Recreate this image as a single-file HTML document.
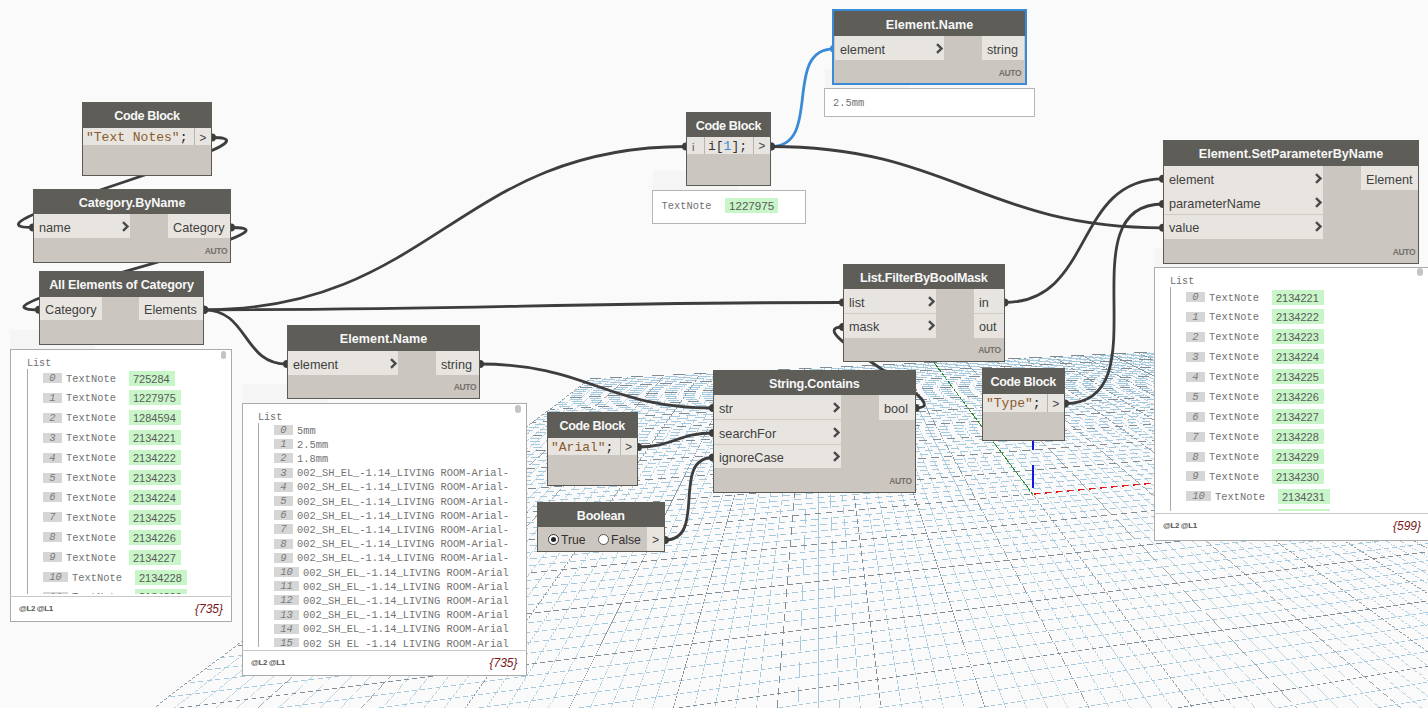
<!DOCTYPE html>
<html><head><meta charset="utf-8"><style>
html,body{margin:0;padding:0;width:1428px;height:708px;overflow:hidden;background:#fafafa;}
</style></head><body>
<svg style="position:absolute;left:0;top:0" width="1428" height="708" viewBox="0 0 1428 708">
<defs><clipPath id="gc"><rect x="0" y="0" width="1428" height="708"/></clipPath></defs>
<g clip-path="url(#gc)" shape-rendering="crispEdges"><g fill="none" stroke-width="1"><path d="M171.81 710.00L597.99 378.37" stroke="#a6c9de" stroke-width="0.789" stroke-dasharray="4.342 1.369" stroke-dashoffset="5.027"/><path d="M192.68 710.00L605.54 378.01" stroke="#a6c9de" stroke-width="0.779" stroke-dasharray="5.044 1.507" stroke-dashoffset="5.798"/><path d="M213.55 710.00L613.05 377.65" stroke="#a6c9de" stroke-width="0.769" stroke-dasharray="6.040 1.699" stroke-dashoffset="6.890"/><path d="M234.42 710.00L620.54 377.29" stroke="#a6c9de" stroke-width="0.758" stroke-dasharray="7.559 1.985" stroke-dashoffset="8.551"/><path d="M276.16 710.00L635.41 376.58" stroke="#a6c9de" stroke-width="0.733" stroke-dasharray="15.533 3.442" stroke-dashoffset="17.254"/><path d="M297.03 710.00L642.80 376.23" stroke="#a6c9de" stroke-width="0.719" stroke-dasharray="33.403 6.652" stroke-dashoffset="36.729"/><path d="M317.90 710.00L650.16 375.88" stroke="#a6c9de" stroke-width="0.709" stroke-dasharray="213.972 38.901" stroke-dashoffset="5.988"/><path d="M338.77 710.00L657.49 375.53" stroke="#a6c9de" stroke-width="0.724" stroke-dasharray="24.305 5.021" stroke-dashoffset="4.270"/><path d="M380.51 710.00L672.05 374.84" stroke="#a6c9de" stroke-width="0.754" stroke-dasharray="8.098 2.085" stroke-dashoffset="3.972"/><path d="M401.38 710.00L679.29 374.49" stroke="#a6c9de" stroke-width="0.770" stroke-dasharray="5.893 1.671" stroke-dashoffset="3.877"/><path d="M422.25 710.00L686.50 374.15" stroke="#a6c9de" stroke-width="0.786" stroke-dasharray="4.556 1.412" stroke-dashoffset="3.792"/><path d="M443.12 710.00L693.67 373.80" stroke="#a6c9de" stroke-width="0.802" stroke-dasharray="3.664 1.232" stroke-dashoffset="3.713"/><path d="M484.85 710.00L707.94 373.12" stroke="#a6c9de" stroke-width="0.834" stroke-dasharray="2.555 0.996" stroke-dashoffset="0.019"/><path d="M505.72 710.00L715.03 372.79" stroke="#a6c9de" stroke-width="0.850" stroke-dasharray="2.191 0.912" stroke-dashoffset="0.401"/><path d="M526.59 710.00L722.10 372.45" stroke="#a6c9de" stroke-width="0.865" stroke-dasharray="1.904 0.842" stroke-dashoffset="0.696"/><path d="M547.46 710.00L729.13 372.11" stroke="#a6c9de" stroke-width="0.881" stroke-dasharray="1.673 0.783" stroke-dashoffset="0.928"/><path d="M589.20 710.00L743.11 371.45" stroke="#a6c9de" stroke-width="0.910" stroke-dasharray="1.593 0.824" stroke-dashoffset="0.075"/><path d="M610.07 710.00L750.06 371.12" stroke="#a6c9de" stroke-width="0.924" stroke-dasharray="1.700 0.919" stroke-dashoffset="2.345"/><path d="M630.94 710.00L756.98 370.79" stroke="#a6c9de" stroke-width="0.937" stroke-dasharray="1.838 1.033" stroke-dashoffset="2.183"/><path d="M651.81 710.00L763.87 370.46" stroke="#a6c9de" stroke-width="0.950" stroke-dasharray="2.016 1.175" stroke-dashoffset="1.996"/><path d="M693.55 710.00L777.57 369.80" stroke="#a6c9de" stroke-width="0.971" stroke-dasharray="2.577 1.593" stroke-dashoffset="1.491"/><path d="M714.42 710.00L784.38 369.48" stroke="#a6c9de" stroke-width="0.980" stroke-dasharray="3.044 1.925" stroke-dashoffset="1.114"/><path d="M735.29 710.00L791.16 369.16" stroke="#a6c9de" stroke-width="0.987" stroke-dasharray="3.758 2.423" stroke-dashoffset="0.564"/><path d="M756.16 710.00L797.92 368.83" stroke="#a6c9de" stroke-width="0.993" stroke-dasharray="4.975 3.255" stroke-dashoffset="7.892"/><path d="M797.90 710.00L811.35 368.19" stroke="#a6c9de" stroke-width="0.999" stroke-dasharray="15.267 10.158" stroke-dashoffset="17.687"/><path d="M818.76 710.00L818.03 367.88" stroke="#a6c9de" stroke-width="1.000" stroke-dasharray="277.486 184.990" stroke-dashoffset="16.276"/><path d="M839.63 710.00L824.67 367.56" stroke="#a6c9de" stroke-width="0.999" stroke-dasharray="13.760 9.152" stroke-dashoffset="3.805"/><path d="M860.50 710.00L831.30 367.24" stroke="#a6c9de" stroke-width="0.996" stroke-dasharray="7.092 4.686" stroke-dashoffset="3.504"/><path d="M902.24 710.00L844.46 366.62" stroke="#a6c9de" stroke-width="0.986" stroke-dasharray="3.667 2.360" stroke-dashoffset="3.386"/><path d="M923.11 710.00L851.01 366.30" stroke="#a6c9de" stroke-width="0.979" stroke-dasharray="2.986 1.885" stroke-dashoffset="3.384"/><path d="M943.98 710.00L857.53 365.99" stroke="#a6c9de" stroke-width="0.970" stroke-dasharray="2.538 1.565" stroke-dashoffset="3.398"/><path d="M964.85 710.00L864.02 365.68" stroke="#a6c9de" stroke-width="0.960" stroke-dasharray="2.225 1.334" stroke-dashoffset="3.423"/><path d="M1006.59 710.00L876.94 365.07" stroke="#a6c9de" stroke-width="0.936" stroke-dasharray="1.822 1.020" stroke-dashoffset="0.657"/><path d="M1027.46 710.00L883.35 364.76" stroke="#a6c9de" stroke-width="0.923" stroke-dasharray="1.688 0.908" stroke-dashoffset="0.951"/><path d="M1048.33 710.00L889.75 364.46" stroke="#a6c9de" stroke-width="0.909" stroke-dasharray="1.583 0.815" stroke-dashoffset="1.203"/><path d="M1069.20 710.00L896.12 364.15" stroke="#a6c9de" stroke-width="0.894" stroke-dasharray="1.502 0.737" stroke-dashoffset="0.074"/><path d="M1110.94 710.00L908.78 363.55" stroke="#a6c9de" stroke-width="0.864" stroke-dasharray="1.931 0.849" stroke-dashoffset="2.178"/><path d="M1131.81 710.00L915.08 363.25" stroke="#a6c9de" stroke-width="0.848" stroke-dasharray="2.225 0.920" stroke-dashoffset="2.074"/><path d="M1152.68 710.00L921.35 362.95" stroke="#a6c9de" stroke-width="0.832" stroke-dasharray="2.599 1.005" stroke-dashoffset="1.930"/><path d="M1173.54 710.00L927.60 362.65" stroke="#a6c9de" stroke-width="0.816" stroke-dasharray="3.086 1.112" stroke-dashoffset="1.730"/><path d="M1215.28 710.00L940.02 362.06" stroke="#a6c9de" stroke-width="0.784" stroke-dasharray="4.670 1.434" stroke-dashoffset="1.012"/><path d="M1236.15 710.00L946.20 361.77" stroke="#a6c9de" stroke-width="0.768" stroke-dasharray="6.071 1.705" stroke-dashoffset="0.335"/><path d="M1257.02 710.00L952.35 361.47" stroke="#a6c9de" stroke-width="0.753" stroke-dasharray="8.413 2.144" stroke-dashoffset="9.717"/><path d="M1277.89 710.00L958.48 361.18" stroke="#a6c9de" stroke-width="0.738" stroke-dasharray="13.085 2.999" stroke-dashoffset="12.838"/><path d="M1319.63 710.00L970.67 360.60" stroke="#a6c9de" stroke-width="0.708" stroke-dasharray="956.913 171.526" stroke-dashoffset="625.397"/><path d="M1340.50 710.00L976.73 360.31" stroke="#a6c9de" stroke-width="0.721" stroke-dasharray="29.821 6.010" stroke-dashoffset="32.826"/><path d="M1361.37 710.00L982.76 360.02" stroke="#a6c9de" stroke-width="0.734" stroke-dasharray="14.716 3.294" stroke-dashoffset="16.363"/><path d="M1382.24 710.00L988.78 359.74" stroke="#a6c9de" stroke-width="0.747" stroke-dasharray="9.797 2.399" stroke-dashoffset="10.996"/><path d="M1423.98 710.00L1000.74 359.17" stroke="#a6c9de" stroke-width="0.770" stroke-dasharray="5.917 1.675" stroke-dashoffset="6.755"/><path d="M1430.00 698.10L1006.69 358.88" stroke="#a6c9de" stroke-width="0.780" stroke-dasharray="4.960 1.491" stroke-dashoffset="6.368"/><path d="M1430.00 682.30L1012.61 358.60" stroke="#a6c9de" stroke-width="0.790" stroke-dasharray="4.281 1.357" stroke-dashoffset="1.017"/><path d="M1430.00 667.48L1018.52 358.32" stroke="#a6c9de" stroke-width="0.799" stroke-dasharray="3.775 1.255" stroke-dashoffset="1.811"/><path d="M1430.00 640.46L1030.26 357.76" stroke="#a6c9de" stroke-width="0.816" stroke-dasharray="3.074 1.109" stroke-dashoffset="1.384"/><path d="M1430.00 628.11L1036.09 357.48" stroke="#a6c9de" stroke-width="0.824" stroke-dasharray="2.822 1.055" stroke-dashoffset="3.772"/><path d="M1430.00 616.44L1041.91 357.20" stroke="#a6c9de" stroke-width="0.832" stroke-dasharray="2.614 1.009" stroke-dashoffset="1.090"/><path d="M1430.00 605.40L1047.71 356.93" stroke="#a6c9de" stroke-width="0.838" stroke-dasharray="2.438 0.969" stroke-dashoffset="0.882"/><path d="M1430.00 585.02L1059.23 356.38" stroke="#a6c9de" stroke-width="0.851" stroke-dasharray="2.160 0.904" stroke-dashoffset="2.670"/><path d="M1430.00 575.59L1064.96 356.10" stroke="#a6c9de" stroke-width="0.857" stroke-dasharray="2.049 0.878" stroke-dashoffset="1.291"/><path d="M1430.00 566.62L1070.67 355.83" stroke="#a6c9de" stroke-width="0.863" stroke-dasharray="1.951 0.854" stroke-dashoffset="1.320"/><path d="M1430.00 558.08L1076.36 355.56" stroke="#a6c9de" stroke-width="0.868" stroke-dasharray="1.865 0.832" stroke-dashoffset="2.499"/><path d="M1430.00 542.16L1087.68 355.02" stroke="#a6c9de" stroke-width="0.877" stroke-dasharray="1.719 0.795" stroke-dashoffset="0.006"/><path d="M1430.00 534.73L1093.30 354.75" stroke="#a6c9de" stroke-width="0.882" stroke-dasharray="1.657 0.779" stroke-dashoffset="1.390"/><path d="M1430.00 527.62L1098.91 354.49" stroke="#a6c9de" stroke-width="0.886" stroke-dasharray="1.602 0.764" stroke-dashoffset="1.091"/><path d="M1430.00 520.82L1104.50 354.22" stroke="#a6c9de" stroke-width="0.890" stroke-dasharray="1.551 0.750" stroke-dashoffset="1.506"/><path d="M1430.00 508.04L1115.61 353.69" stroke="#a6c9de" stroke-width="0.898" stroke-dasharray="1.517 0.752" stroke-dashoffset="1.804"/><path d="M1430.00 502.03L1121.14 353.43" stroke="#a6c9de" stroke-width="0.901" stroke-dasharray="1.536 0.771" stroke-dashoffset="1.845"/><path d="M1430.00 496.26L1126.64 353.16" stroke="#a6c9de" stroke-width="0.904" stroke-dasharray="1.555 0.789" stroke-dashoffset="1.335"/><path d="M1430.00 490.71L1132.13 352.90" stroke="#a6c9de" stroke-width="0.908" stroke-dasharray="1.574 0.807" stroke-dashoffset="0.280"/><path d="M1430.00 480.23L1143.04 352.38" stroke="#a6c9de" stroke-width="0.913" stroke-dasharray="1.614 0.843" stroke-dashoffset="1.468"/><path d="M1430.00 475.28L1148.47 352.12" stroke="#a6c9de" stroke-width="0.916" stroke-dasharray="1.634 0.861" stroke-dashoffset="1.378"/><path d="M1430.00 470.50L1153.88 351.86" stroke="#a6c9de" stroke-width="0.919" stroke-dasharray="1.654 0.879" stroke-dashoffset="0.836"/><path d="M1430.00 465.89L1159.27 351.61" stroke="#a6c9de" stroke-width="0.921" stroke-dasharray="1.675 0.897" stroke-dashoffset="2.418"/><path d="M1430.00 457.13L1169.99 351.10" stroke="#a6c9de" stroke-width="0.926" stroke-dasharray="1.716 0.932" stroke-dashoffset="1.834"/><path d="M1430.00 452.97L1175.32 350.84" stroke="#a6c9de" stroke-width="0.928" stroke-dasharray="1.737 0.950" stroke-dashoffset="2.283"/><path d="M1430.00 448.95L1180.64 350.59" stroke="#a6c9de" stroke-width="0.930" stroke-dasharray="1.758 0.967" stroke-dashoffset="2.374"/><path d="M1430.00 445.06L1185.93 350.34" stroke="#a6c9de" stroke-width="0.932" stroke-dasharray="1.779 0.985" stroke-dashoffset="2.109"/><path d="M1430.00 437.64L1196.47 349.83" stroke="#a6c9de" stroke-width="0.936" stroke-dasharray="1.821 1.020" stroke-dashoffset="0.517"/><path d="M1430.00 434.10L1201.70 349.58" stroke="#a6c9de" stroke-width="0.938" stroke-dasharray="1.843 1.038" stroke-dashoffset="2.075"/><path d="M1430.00 430.67L1206.93 349.34" stroke="#a6c9de" stroke-width="0.940" stroke-dasharray="1.864 1.055" stroke-dashoffset="0.443"/><path d="M1430.00 427.34L1212.13 349.09" stroke="#a6c9de" stroke-width="0.941" stroke-dasharray="1.886 1.072" stroke-dashoffset="1.422"/><path d="M1365.82 710.00L1430.00 698.55" stroke="#a6c9de" stroke-width="0.984" stroke-dasharray="3.471 2.224" stroke-dashoffset="4.583"/><path d="M1265.50 710.00L1430.00 681.67" stroke="#a6c9de" stroke-width="0.985" stroke-dasharray="3.587 2.305" stroke-dashoffset="4.740"/><path d="M1064.88 710.00L1430.00 651.16" stroke="#a6c9de" stroke-width="0.987" stroke-dasharray="3.820 2.466" stroke-dashoffset="5.053"/><path d="M964.56 710.00L1430.00 637.34" stroke="#a6c9de" stroke-width="0.988" stroke-dasharray="3.937 2.546" stroke-dashoffset="5.210"/><path d="M864.25 710.00L1430.00 624.34" stroke="#a6c9de" stroke-width="0.989" stroke-dasharray="4.054 2.626" stroke-dashoffset="5.367"/><path d="M763.93 710.00L1430.00 612.11" stroke="#a6c9de" stroke-width="0.989" stroke-dasharray="4.171 2.707" stroke-dashoffset="5.524"/><path d="M563.31 710.00L1430.00 589.69" stroke="#a6c9de" stroke-width="0.991" stroke-dasharray="4.406 2.867" stroke-dashoffset="5.839"/><path d="M462.99 710.00L1430.00 579.38" stroke="#a6c9de" stroke-width="0.991" stroke-dasharray="4.523 2.948" stroke-dashoffset="5.997"/><path d="M362.68 710.00L1430.00 569.62" stroke="#a6c9de" stroke-width="0.991" stroke-dasharray="4.641 3.028" stroke-dashoffset="6.155"/><path d="M262.36 710.00L1430.00 560.35" stroke="#a6c9de" stroke-width="0.992" stroke-dasharray="4.758 3.108" stroke-dashoffset="6.312"/><path d="M168.16 697.02L1430.00 543.17" stroke="#a6c9de" stroke-width="0.993" stroke-dasharray="4.994 3.268" stroke-dashoffset="6.427"/><path d="M186.48 683.21L1430.00 535.20" stroke="#a6c9de" stroke-width="0.993" stroke-dasharray="5.112 3.348" stroke-dashoffset="4.999"/><path d="M203.80 670.16L1430.00 527.59" stroke="#a6c9de" stroke-width="0.993" stroke-dasharray="5.230 3.429" stroke-dashoffset="5.593"/><path d="M220.20 657.80L1430.00 520.33" stroke="#a6c9de" stroke-width="0.994" stroke-dasharray="5.349 3.509" stroke-dashoffset="0.032"/><path d="M250.49 634.96L1430.00 506.75" stroke="#a6c9de" stroke-width="0.994" stroke-dasharray="5.585 3.669" stroke-dashoffset="7.767"/><path d="M264.51 624.39L1430.00 500.39" stroke="#a6c9de" stroke-width="0.994" stroke-dasharray="5.703 3.749" stroke-dashoffset="3.878"/><path d="M277.86 614.33L1430.00 494.30" stroke="#a6c9de" stroke-width="0.995" stroke-dasharray="5.822 3.829" stroke-dashoffset="4.546"/><path d="M290.58 604.74L1430.00 488.46" stroke="#a6c9de" stroke-width="0.995" stroke-dasharray="5.940 3.909" stroke-dashoffset="0.569"/><path d="M314.30 586.86L1430.00 477.46" stroke="#a6c9de" stroke-width="0.995" stroke-dasharray="6.177 4.069" stroke-dashoffset="9.602"/><path d="M325.37 578.51L1430.00 472.27" stroke="#a6c9de" stroke-width="0.995" stroke-dasharray="6.296 4.149" stroke-dashoffset="2.994"/><path d="M335.97 570.52L1430.00 467.28" stroke="#a6c9de" stroke-width="0.996" stroke-dasharray="6.415 4.229" stroke-dashoffset="2.944"/><path d="M346.13 562.87L1430.00 462.48" stroke="#a6c9de" stroke-width="0.996" stroke-dasharray="6.533 4.309" stroke-dashoffset="10.081"/><path d="M365.20 548.49L1430.00 453.39" stroke="#a6c9de" stroke-width="0.996" stroke-dasharray="6.771 4.469" stroke-dashoffset="3.455"/><path d="M374.17 541.73L1430.00 449.08" stroke="#a6c9de" stroke-width="0.996" stroke-dasharray="6.890 4.549" stroke-dashoffset="0.786"/><path d="M382.79 535.23L1430.00 444.92" stroke="#a6c9de" stroke-width="0.996" stroke-dasharray="7.009 4.629" stroke-dashoffset="6.600"/><path d="M391.08 528.98L1430.00 440.90" stroke="#a6c9de" stroke-width="0.996" stroke-dasharray="7.128 4.709" stroke-dashoffset="9.679"/><path d="M406.75 517.17L1430.00 433.26" stroke="#a6c9de" stroke-width="0.997" stroke-dasharray="7.365 4.869" stroke-dashoffset="7.710"/><path d="M414.17 511.58L1430.00 429.62" stroke="#a6c9de" stroke-width="0.997" stroke-dasharray="7.484 4.949" stroke-dashoffset="2.695"/><path d="M421.32 506.20L1430.00 426.10" stroke="#a6c9de" stroke-width="0.997" stroke-dasharray="7.603 5.029" stroke-dashoffset="7.649"/><path d="M428.21 500.99L1426.71 422.94" stroke="#a6c9de" stroke-width="0.997" stroke-dasharray="7.722 5.109" stroke-dashoffset="10.349"/><path d="M441.32 491.12L1411.53 417.57" stroke="#a6c9de" stroke-width="0.997" stroke-dasharray="7.961 5.269" stroke-dashoffset="9.045"/><path d="M447.54 486.42L1404.22 414.98" stroke="#a6c9de" stroke-width="0.997" stroke-dasharray="8.080 5.349" stroke-dashoffset="5.065"/><path d="M453.57 481.88L1397.09 412.46" stroke="#a6c9de" stroke-width="0.997" stroke-dasharray="8.199 5.429" stroke-dashoffset="12.509"/><path d="M459.40 477.49L1390.13 410.00" stroke="#a6c9de" stroke-width="0.997" stroke-dasharray="8.318 5.509" stroke-dashoffset="4.330"/><path d="M470.52 469.11L1376.70 405.24" stroke="#a6c9de" stroke-width="0.998" stroke-dasharray="8.556 5.669" stroke-dashoffset="9.879"/><path d="M475.82 465.11L1370.22 402.95" stroke="#a6c9de" stroke-width="0.998" stroke-dasharray="8.675 5.749" stroke-dashoffset="9.997"/><path d="M480.97 461.23L1363.88 400.71" stroke="#a6c9de" stroke-width="0.998" stroke-dasharray="8.794 5.829" stroke-dashoffset="8.354"/><path d="M485.96 457.47L1357.69 398.52" stroke="#a6c9de" stroke-width="0.998" stroke-dasharray="8.914 5.909" stroke-dashoffset="4.958"/><path d="M495.51 450.26L1345.73 394.28" stroke="#a6c9de" stroke-width="0.998" stroke-dasharray="9.152 6.068" stroke-dashoffset="8.155"/><path d="M500.09 446.82L1339.94 392.24" stroke="#a6c9de" stroke-width="0.998" stroke-dasharray="9.271 6.148" stroke-dashoffset="15.159"/><path d="M504.53 443.47L1334.28 390.23" stroke="#a6c9de" stroke-width="0.998" stroke-dasharray="9.391 6.228" stroke-dashoffset="5.215"/><path d="M508.85 440.21L1328.74 388.27" stroke="#a6c9de" stroke-width="0.998" stroke-dasharray="9.510 6.308" stroke-dashoffset="9.368"/><path d="M517.15 433.95L1318.01 384.47" stroke="#a6c9de" stroke-width="0.998" stroke-dasharray="9.748 6.468" stroke-dashoffset="13.722"/><path d="M521.13 430.95L1312.81 382.64" stroke="#a6c9de" stroke-width="0.998" stroke-dasharray="9.868 6.548" stroke-dashoffset="13.934"/><path d="M525.01 428.03L1307.72 380.83" stroke="#a6c9de" stroke-width="0.998" stroke-dasharray="9.987 6.628" stroke-dashoffset="12.842"/><path d="M528.79 425.18L1302.73 379.07" stroke="#a6c9de" stroke-width="0.998" stroke-dasharray="10.106 6.708" stroke-dashoffset="10.450"/><path d="M536.07 419.70L1293.05 375.64" stroke="#a6c9de" stroke-width="0.998" stroke-dasharray="10.345 6.868" stroke-dashoffset="1.782"/><path d="M539.57 417.06L1288.36 373.98" stroke="#a6c9de" stroke-width="0.998" stroke-dasharray="10.464 6.948" stroke-dashoffset="12.926"/><path d="M542.98 414.48L1283.76 372.35" stroke="#a6c9de" stroke-width="0.998" stroke-dasharray="10.584 7.027" stroke-dashoffset="5.571"/><path d="M546.31 411.97L1279.24 370.76" stroke="#a6c9de" stroke-width="0.998" stroke-dasharray="10.703 7.107" stroke-dashoffset="14.745"/><path d="M552.74 407.13L1270.47 367.65" stroke="#a6c9de" stroke-width="0.998" stroke-dasharray="10.942 7.267" stroke-dashoffset="12.246"/><path d="M555.84 404.79L1266.21 366.14" stroke="#a6c9de" stroke-width="0.999" stroke-dasharray="11.061 7.347" stroke-dashoffset="0.181"/><path d="M558.87 402.51L1262.03 364.66" stroke="#a6c9de" stroke-width="0.999" stroke-dasharray="11.181 7.427" stroke-dashoffset="5.452"/><path d="M561.83 400.28L1257.92 363.21" stroke="#a6c9de" stroke-width="0.999" stroke-dasharray="11.300 7.507" stroke-dashoffset="9.855"/><path d="M567.55 395.96L1249.94 360.39" stroke="#a6c9de" stroke-width="0.999" stroke-dasharray="11.539 7.667" stroke-dashoffset="16.062"/><path d="M570.32 393.88L1246.05 359.01" stroke="#a6c9de" stroke-width="0.999" stroke-dasharray="11.659 7.747" stroke-dashoffset="17.871"/><path d="M573.02 391.84L1242.23 357.66" stroke="#a6c9de" stroke-width="0.999" stroke-dasharray="11.778 7.826" stroke-dashoffset="18.820"/><path d="M575.67 389.85L1238.48 356.33" stroke="#a6c9de" stroke-width="0.999" stroke-dasharray="11.897 7.906" stroke-dashoffset="18.911"/><path d="M580.79 385.98L1231.18 353.75" stroke="#a6c9de" stroke-width="0.999" stroke-dasharray="12.136 8.066" stroke-dashoffset="16.526"/><path d="M583.27 384.11L1227.63 352.49" stroke="#a6c9de" stroke-width="0.999" stroke-dasharray="12.256 8.146" stroke-dashoffset="14.055"/><path d="M585.70 382.28L1224.13 351.25" stroke="#a6c9de" stroke-width="0.999" stroke-dasharray="12.375 8.226" stroke-dashoffset="10.732"/><path d="M588.08 380.48L1220.69 350.04" stroke="#a6c9de" stroke-width="0.999" stroke-dasharray="12.495 8.306" stroke-dashoffset="6.560"/><path d="M150.94 710.00L590.42 378.73" stroke="#7f8c96" stroke-width="0.799" stroke-dasharray="3.822 1.265" stroke-dashoffset="4.454"/><path d="M255.29 710.00L627.99 376.94" stroke="#7f8c96" stroke-width="0.746" stroke-dasharray="10.148 2.463" stroke-dashoffset="11.380"/><path d="M359.64 710.00L664.78 375.18" stroke="#7f8c96" stroke-width="0.739" stroke-dasharray="12.393 2.873" stroke-dashoffset="4.087"/><path d="M463.99 710.00L700.82 373.46" stroke="#7f8c96" stroke-width="0.818" stroke-dasharray="3.028 1.099" stroke-dashoffset="3.639"/><path d="M568.33 710.00L736.13 371.78" stroke="#7f8c96" stroke-width="0.896" stroke-dasharray="1.507 0.743" stroke-dashoffset="0.376"/><path d="M672.68 710.00L770.73 370.13" stroke="#7f8c96" stroke-width="0.961" stroke-dasharray="2.253 1.355" stroke-dashoffset="1.772"/><path d="M777.03 710.00L804.65 368.51" stroke="#7f8c96" stroke-width="0.997" stroke-dasharray="7.466 4.937" stroke-dashoffset="10.258"/><path d="M881.37 710.00L837.89 366.93" stroke="#7f8c96" stroke-width="0.992" stroke-dasharray="4.810 3.143" stroke-dashoffset="3.415"/><path d="M985.72 710.00L870.49 365.37" stroke="#7f8c96" stroke-width="0.948" stroke-dasharray="1.995 1.158" stroke-dashoffset="0.304"/><path d="M1090.07 710.00L902.46 363.85" stroke="#7f8c96" stroke-width="0.879" stroke-dasharray="1.695 0.789" stroke-dashoffset="2.255"/><path d="M1194.41 710.00L933.82 362.36" stroke="#7f8c96" stroke-width="0.800" stroke-dasharray="3.743 1.248" stroke-dashoffset="1.441"/><path d="M1298.76 710.00L964.58 360.89" stroke="#7f8c96" stroke-width="0.722" stroke-dasharray="26.878 5.483" stroke-dashoffset="21.880"/><path d="M1403.11 710.00L994.77 359.45" stroke="#7f8c96" stroke-width="0.759" stroke-dasharray="7.364 1.949" stroke-dashoffset="8.339"/><path d="M1430.00 653.57L1024.40 358.04" stroke="#7f8c96" stroke-width="0.808" stroke-dasharray="3.385 1.175" stroke-dashoffset="1.990"/><path d="M1430.00 594.94L1053.48 356.65" stroke="#7f8c96" stroke-width="0.845" stroke-dasharray="2.289 0.935" stroke-dashoffset="2.570"/><path d="M1430.00 549.94L1082.03 355.29" stroke="#7f8c96" stroke-width="0.873" stroke-dasharray="1.788 0.813" stroke-dashoffset="2.027"/><path d="M1430.00 514.30L1110.06 353.95" stroke="#7f8c96" stroke-width="0.894" stroke-dasharray="1.505 0.737" stroke-dashoffset="0.294"/><path d="M1430.00 485.37L1137.60 352.64" stroke="#7f8c96" stroke-width="0.911" stroke-dasharray="1.594 0.825" stroke-dashoffset="1.104"/><path d="M1430.00 461.43L1164.64 351.35" stroke="#7f8c96" stroke-width="0.924" stroke-dasharray="1.695 0.915" stroke-dashoffset="1.022"/><path d="M1430.00 441.29L1191.21 350.09" stroke="#7f8c96" stroke-width="0.934" stroke-dasharray="1.800 1.003" stroke-dashoffset="1.489"/><path d="M1430.00 424.11L1217.31 348.84" stroke="#7f8c96" stroke-width="0.943" stroke-dasharray="1.908 1.090" stroke-dashoffset="2.133"/><path d="M1165.19 710.00L1430.00 665.91" stroke="#7f8c96" stroke-width="0.986" stroke-dasharray="3.704 2.385" stroke-dashoffset="4.896"/><path d="M663.62 710.00L1430.00 600.58" stroke="#7f8c96" stroke-width="0.990" stroke-dasharray="4.288 2.787" stroke-dashoffset="5.682"/><path d="M162.05 710.00L1430.00 551.55" stroke="#7f8c96" stroke-width="0.992" stroke-dasharray="4.876 3.188" stroke-dashoffset="6.470"/><path d="M235.74 646.08L1430.00 513.39" stroke="#7f8c96" stroke-width="0.994" stroke-dasharray="5.467 3.589" stroke-dashoffset="6.506"/><path d="M302.71 595.60L1430.00 482.85" stroke="#7f8c96" stroke-width="0.995" stroke-dasharray="6.059 3.989" stroke-dashoffset="2.042"/><path d="M355.86 555.53L1430.00 457.85" stroke="#7f8c96" stroke-width="0.996" stroke-dasharray="6.652 4.389" stroke-dashoffset="2.948"/><path d="M399.07 522.97L1430.00 437.01" stroke="#7f8c96" stroke-width="0.997" stroke-dasharray="7.246 4.789" stroke-dashoffset="10.043"/><path d="M434.88 495.97L1419.02 420.22" stroke="#7f8c96" stroke-width="0.997" stroke-dasharray="7.841 5.189" stroke-dashoffset="10.810"/><path d="M465.05 473.23L1383.33 407.59" stroke="#7f8c96" stroke-width="0.997" stroke-dasharray="8.437 5.589" stroke-dashoffset="7.993"/><path d="M490.81 453.81L1351.64 396.38" stroke="#7f8c96" stroke-width="0.998" stroke-dasharray="9.033 5.989" stroke-dashoffset="14.838"/><path d="M513.06 437.04L1323.32 386.35" stroke="#7f8c96" stroke-width="0.998" stroke-dasharray="9.629 6.388" stroke-dashoffset="12.202"/><path d="M532.48 422.40L1297.84 377.34" stroke="#7f8c96" stroke-width="0.998" stroke-dasharray="10.226 6.788" stroke-dashoffset="6.762"/><path d="M549.56 409.52L1274.81 369.19" stroke="#7f8c96" stroke-width="0.998" stroke-dasharray="10.823 7.187" stroke-dashoffset="5.029"/><path d="M564.72 398.10L1253.89 361.79" stroke="#7f8c96" stroke-width="0.999" stroke-dasharray="11.420 7.587" stroke-dashoffset="13.391"/><path d="M578.26 387.89L1234.80 355.03" stroke="#7f8c96" stroke-width="0.999" stroke-dasharray="12.017 7.986" stroke-dashoffset="18.146"/><path d="M590.42 378.73L1217.31 348.84" stroke="#7f8c96" stroke-width="0.999" stroke-dasharray="12.614 8.386" stroke-dashoffset="1.541"/></g><path d="M1032.5 494.0L933.8 362.4" stroke="#228b22" stroke-width="1" stroke-dasharray="2.5 0.8"/><path d="M1032.5 494.0L1505.9 451.0" stroke="#e81818" stroke-width="1.6" stroke-dasharray="6.5 4.5" stroke-dashoffset="-1.5"/><path d="M1033 488L1033 465M1033 450L1033 441" stroke="#1515e0" stroke-width="1.7"/></g>
</svg>
<svg style="position:absolute;left:0;top:0" width="1428" height="708"><path d="M212 137.5C302.15848545755415 137.5 -57.158485457554136 227.5 33 227.5" stroke="#3d3d3d" stroke-width="2.8" fill="none"/><circle cx="212" cy="137.5" r="4" fill="#3d3d3d"/><circle cx="33" cy="227.5" r="4" fill="#3d3d3d"/><path d="M231 227.5C325.00293200214554 227.5 -55.00293200214554 309.8 39 309.8" stroke="#3d3d3d" stroke-width="2.8" fill="none"/><circle cx="231" cy="227.5" r="4" fill="#3d3d3d"/><circle cx="39" cy="309.8" r="4" fill="#3d3d3d"/><path d="M204 309.8C433.01016402116306 309.8 456.98983597883694 146.5 686 146.5" stroke="#3d3d3d" stroke-width="2.8" fill="none"/><circle cx="204" cy="309.8" r="4" fill="#3d3d3d"/><circle cx="686" cy="146.5" r="4" fill="#3d3d3d"/><path d="M204 309.8C248.6082346658103 309.8 242.3917653341897 364 287 364" stroke="#3d3d3d" stroke-width="2.8" fill="none"/><circle cx="204" cy="309.8" r="4" fill="#3d3d3d"/><circle cx="287" cy="364" r="4" fill="#3d3d3d"/><path d="M204 309.8C491.5687634723215 309.8 555.4312365276785 302.5 843 302.5" stroke="#3d3d3d" stroke-width="2.8" fill="none"/><circle cx="204" cy="309.8" r="4" fill="#3d3d3d"/><circle cx="843" cy="302.5" r="4" fill="#3d3d3d"/><path d="M771 146.5C823.3129403207275 146.5 781.6870596792725 48.8 834 48.8" stroke="#3a8ad6" stroke-width="2.8" fill="none"/><circle cx="771" cy="146.5" r="4" fill="#3a8ad6"/><circle cx="834" cy="48.8" r="4" fill="#3a8ad6"/><path d="M771 146.5C951.1538848457062 146.5 982.8461151542938 227.8 1163 227.8" stroke="#3d3d3d" stroke-width="2.8" fill="none"/><circle cx="771" cy="146.5" r="4" fill="#3d3d3d"/><circle cx="1163" cy="227.8" r="4" fill="#3d3d3d"/><path d="M1004.5 302.5C1094.9756754603136 302.5 1072.5243245396864 178.8 1163 178.8" stroke="#3d3d3d" stroke-width="2.8" fill="none"/><circle cx="1004.5" cy="302.5" r="4" fill="#3d3d3d"/><circle cx="1163" cy="178.8" r="4" fill="#3d3d3d"/><path d="M1065 403.5C1165.021800748637 403.5 1062.978199251363 204 1163 204" stroke="#3d3d3d" stroke-width="2.8" fill="none"/><circle cx="1065" cy="403.5" r="4" fill="#3d3d3d"/><circle cx="1163" cy="204" r="4" fill="#3d3d3d"/><path d="M915.5 408C964.4182289642624 408 794.0817710357376 327 843 327" stroke="#3d3d3d" stroke-width="2.8" fill="none"/><circle cx="915.5" cy="408" r="4" fill="#3d3d3d"/><circle cx="843" cy="327" r="4" fill="#3d3d3d"/><path d="M638 447C672.3329652083825 447 678.6670347916175 433 713 433" stroke="#3d3d3d" stroke-width="2.8" fill="none"/><circle cx="638" cy="447" r="4" fill="#3d3d3d"/><circle cx="713" cy="433" r="4" fill="#3d3d3d"/><path d="M665 540C707.9514333288192 540 670.0485666711808 457.5 713 457.5" stroke="#3d3d3d" stroke-width="2.8" fill="none"/><circle cx="665" cy="540" r="4" fill="#3d3d3d"/><circle cx="713" cy="457.5" r="4" fill="#3d3d3d"/><path d="M480 364C586.7031513124144 364 606.2968486875856 408 713 408" stroke="#3d3d3d" stroke-width="2.8" fill="none"/><circle cx="480" cy="364" r="4" fill="#3d3d3d"/><circle cx="713" cy="408" r="4" fill="#3d3d3d"/></svg>
<div style="position:absolute;left:10px;top:329.5px;width:85px;height:19.5px;background:#f5f5f5;"></div><div style="position:absolute;left:242.5px;top:383.5px;width:85.0px;height:19.5px;background:#f5f5f5;"></div><div style="position:absolute;left:1154.5px;top:247.5px;width:85.0px;height:19.5px;background:#f5f5f5;"></div><div style="position:absolute;left:652.5px;top:170.5px;width:85.0px;height:19.5px;background:#f5f5f5;"></div><div style="position:absolute;left:824.5px;top:68.5px;width:85.0px;height:19.5px;background:#f5f5f5;"></div><div style="position:absolute;left:82px;top:102px;width:130px;height:74px;background:#cbc6bf;box-shadow:inset 0 0 0 1px #5b5a55;"></div><div style="position:absolute;left:82px;top:102px;width:130px;height:26px;background:#5e5d58;"></div><div style="position:absolute;left:82px;top:108.3px;width:130px;text-align:center;white-space:pre;font:bold 12.6px Liberation Sans,sans-serif;letter-spacing:-0.391px;color:#f7f7f7;line-height:16px;">Code Block</div><div style="position:absolute;left:83px;top:128px;width:110.5px;height:17px;background:#e8e5e0;"></div><div style="position:absolute;left:86px;top:130.3px;text-align:left;white-space:pre;font:13px Liberation Mono,monospace;color:#8a5a2e;line-height:16px;">"Text Notes"<span style="color:#222">;</span></div><div style="position:absolute;left:193.5px;top:128px;width:1.0px;height:17px;background:#b8b4ae;"></div><div style="position:absolute;left:194.5px;top:128px;width:16.5px;height:17px;background:#e8e5e0;"></div><div style="position:absolute;left:194.5px;top:130.7px;width:16.5px;text-align:center;white-space:pre;font:12px Liberation Mono,monospace;color:#444;line-height:16px;">&gt;</div><div style="position:absolute;left:33px;top:189px;width:198px;height:73.5px;background:#cbc6bf;box-shadow:inset 0 0 0 1px #5b5a55;"></div><div style="position:absolute;left:33px;top:189px;width:198px;height:25px;background:#5e5d58;"></div><div style="position:absolute;left:33px;top:194.8px;width:198px;text-align:center;white-space:pre;font:bold 12.6px Liberation Sans,sans-serif;letter-spacing:-0.059px;color:#f7f7f7;line-height:16px;">Category.ByName</div><div style="position:absolute;left:34px;top:214px;width:96px;height:24px;background:#e8e5e0;"></div><div style="position:absolute;left:39px;top:219.5px;text-align:left;white-space:pre;font:12.7px Liberation Sans,sans-serif;color:#3f3f3f;line-height:16px;">name</div><div style="position:absolute;left:121px;top:220.5px;width:8px;height:11px"><svg style="display:block" width="8" height="11" viewBox="0 0 8 11"><path d="M2 1.2L6.6 5.5L2 9.8" stroke="#4a4a4a" stroke-width="2.4" fill="none"/></svg></div><div style="position:absolute;left:168px;top:214px;width:62px;height:24px;background:#e8e5e0;"></div><div style="position:absolute;left:173px;top:219.5px;text-align:left;white-space:pre;font:12.7px Liberation Sans,sans-serif;color:#3f3f3f;line-height:16px;">Category</div><div style="position:absolute;left:191px;top:245.5px;width:36.2px;text-align:right;white-space:pre;font:bold 8.5px Liberation Sans,sans-serif;letter-spacing:-0.35px;color:#75716c;line-height:10px;">AUTO</div><div style="position:absolute;left:39px;top:271px;width:165px;height:74px;background:#cbc6bf;box-shadow:inset 0 0 0 1px #5b5a55;"></div><div style="position:absolute;left:39px;top:271px;width:165px;height:25.5px;background:#5e5d58;"></div><div style="position:absolute;left:39px;top:277.05px;width:165px;text-align:center;white-space:pre;font:bold 12.6px Liberation Sans,sans-serif;letter-spacing:-0.183px;color:#f7f7f7;line-height:16px;">All Elements of Category</div><div style="position:absolute;left:40px;top:296.5px;width:62px;height:23.5px;background:#e8e5e0;"></div><div style="position:absolute;left:45px;top:301.75px;text-align:left;white-space:pre;font:12.7px Liberation Sans,sans-serif;color:#3f3f3f;line-height:16px;">Category</div><div style="position:absolute;left:139px;top:296.5px;width:64px;height:23.5px;background:#e8e5e0;"></div><div style="position:absolute;left:144px;top:301.75px;text-align:left;white-space:pre;font:12.7px Liberation Sans,sans-serif;color:#3f3f3f;line-height:16px;">Elements</div><div style="position:absolute;left:287px;top:325px;width:193px;height:73.5px;background:#cbc6bf;box-shadow:inset 0 0 0 1px #5b5a55;"></div><div style="position:absolute;left:287px;top:325px;width:193px;height:26px;background:#5e5d58;"></div><div style="position:absolute;left:287px;top:331.3px;width:193px;text-align:center;white-space:pre;font:bold 12.6px Liberation Sans,sans-serif;letter-spacing:0.073px;color:#f7f7f7;line-height:16px;">Element.Name</div><div style="position:absolute;left:288px;top:351px;width:110px;height:24px;background:#e8e5e0;"></div><div style="position:absolute;left:293px;top:356.5px;text-align:left;white-space:pre;font:12.7px Liberation Sans,sans-serif;color:#3f3f3f;line-height:16px;">element</div><div style="position:absolute;left:389px;top:357.5px;width:8px;height:11px"><svg style="display:block" width="8" height="11" viewBox="0 0 8 11"><path d="M2 1.2L6.6 5.5L2 9.8" stroke="#4a4a4a" stroke-width="2.4" fill="none"/></svg></div><div style="position:absolute;left:436px;top:351px;width:43px;height:24px;background:#e8e5e0;"></div><div style="position:absolute;left:441px;top:356.5px;text-align:left;white-space:pre;font:12.7px Liberation Sans,sans-serif;color:#3f3f3f;line-height:16px;">string</div><div style="position:absolute;left:440px;top:381.5px;width:36.2px;text-align:right;white-space:pre;font:bold 8.5px Liberation Sans,sans-serif;letter-spacing:-0.35px;color:#75716c;line-height:10px;">AUTO</div><div style="position:absolute;left:686px;top:112px;width:85px;height:74px;background:#cbc6bf;box-shadow:inset 0 0 0 1px #5b5a55;"></div><div style="position:absolute;left:686px;top:112px;width:85px;height:25px;background:#5e5d58;"></div><div style="position:absolute;left:686px;top:117.8px;width:85px;text-align:center;white-space:pre;font:bold 12.6px Liberation Sans,sans-serif;letter-spacing:-0.391px;color:#f7f7f7;line-height:16px;">Code Block</div><div style="position:absolute;left:687px;top:137px;width:17px;height:16.5px;background:#e8e5e0;"></div><div style="position:absolute;left:692px;top:138.75px;text-align:left;white-space:pre;font:11px Liberation Sans,sans-serif;color:#555;line-height:16px;">i</div><div style="position:absolute;left:704px;top:137px;width:1px;height:16.5px;background:#b8b4ae;"></div><div style="position:absolute;left:705px;top:137px;width:47.5px;height:16.5px;background:#e8e5e0;"></div><div style="position:absolute;left:708px;top:139.05px;text-align:left;white-space:pre;font:13px Liberation Mono,monospace;color:#333;line-height:16px;">i[<span style="color:#3b8ad8">1</span>];</div><div style="position:absolute;left:752.5px;top:137px;width:1.0px;height:16.5px;background:#b8b4ae;"></div><div style="position:absolute;left:753.5px;top:137px;width:16.5px;height:16.5px;background:#e8e5e0;"></div><div style="position:absolute;left:753.5px;top:139.45px;width:16.5px;text-align:center;white-space:pre;font:12px Liberation Mono,monospace;color:#444;line-height:16px;">&gt;</div><div style="position:absolute;left:834px;top:11px;width:191px;height:72px;background:#cbc6bf;"></div><div style="position:absolute;left:834px;top:11px;width:191px;height:25px;background:#5e5d58;"></div><div style="position:absolute;left:834px;top:16.8px;width:191px;text-align:center;white-space:pre;font:bold 12.6px Liberation Sans,sans-serif;letter-spacing:0.073px;color:#f7f7f7;line-height:16px;">Element.Name</div><div style="position:absolute;left:835px;top:36px;width:109px;height:24px;background:#e8e5e0;"></div><div style="position:absolute;left:840px;top:41.5px;text-align:left;white-space:pre;font:12.7px Liberation Sans,sans-serif;color:#3f3f3f;line-height:16px;">element</div><div style="position:absolute;left:935px;top:42.5px;width:8px;height:11px"><svg style="display:block" width="8" height="11" viewBox="0 0 8 11"><path d="M2 1.2L6.6 5.5L2 9.8" stroke="#4a4a4a" stroke-width="2.4" fill="none"/></svg></div><div style="position:absolute;left:982px;top:36px;width:42px;height:24px;background:#e8e5e0;"></div><div style="position:absolute;left:987px;top:41.5px;text-align:left;white-space:pre;font:12.7px Liberation Sans,sans-serif;color:#3f3f3f;line-height:16px;">string</div><div style="position:absolute;left:985px;top:67.7px;width:36.2px;text-align:right;white-space:pre;font:bold 8.5px Liberation Sans,sans-serif;letter-spacing:-0.35px;color:#75716c;line-height:10px;">AUTO</div><div style="position:absolute;left:832px;top:9px;width:195px;height:76px;box-sizing:border-box;border:2px solid #3b8ad8"></div><div style="position:absolute;left:1163px;top:140px;width:256px;height:123.5px;background:#cbc6bf;box-shadow:inset 0 0 0 1px #5b5a55;"></div><div style="position:absolute;left:1163px;top:140px;width:256px;height:26px;background:#5e5d58;"></div><div style="position:absolute;left:1163px;top:146.3px;width:256px;text-align:center;white-space:pre;font:bold 12.6px Liberation Sans,sans-serif;letter-spacing:0.013px;color:#f7f7f7;line-height:16px;">Element.SetParameterByName</div><div style="position:absolute;left:1164px;top:166px;width:159px;height:24px;background:#e8e5e0;"></div><div style="position:absolute;left:1169px;top:171.5px;text-align:left;white-space:pre;font:12.7px Liberation Sans,sans-serif;color:#3f3f3f;line-height:16px;">element</div><div style="position:absolute;left:1314px;top:172.5px;width:8px;height:11px"><svg style="display:block" width="8" height="11" viewBox="0 0 8 11"><path d="M2 1.2L6.6 5.5L2 9.8" stroke="#4a4a4a" stroke-width="2.4" fill="none"/></svg></div><div style="position:absolute;left:1164px;top:190px;width:159px;height:24.5px;background:#e8e5e0;"></div><div style="position:absolute;left:1169px;top:195.75px;text-align:left;white-space:pre;font:12.7px Liberation Sans,sans-serif;color:#3f3f3f;line-height:16px;">parameterName</div><div style="position:absolute;left:1314px;top:196.75px;width:8px;height:11px"><svg style="display:block" width="8" height="11" viewBox="0 0 8 11"><path d="M2 1.2L6.6 5.5L2 9.8" stroke="#4a4a4a" stroke-width="2.4" fill="none"/></svg></div><div style="position:absolute;left:1164px;top:214.5px;width:159px;height:24.5px;background:#e8e5e0;"></div><div style="position:absolute;left:1164px;top:213.5px;width:159px;height:1.0px;background:#cfcbc5;"></div><div style="position:absolute;left:1169px;top:220.25px;text-align:left;white-space:pre;font:12.7px Liberation Sans,sans-serif;color:#3f3f3f;line-height:16px;">value</div><div style="position:absolute;left:1314px;top:221.25px;width:8px;height:11px"><svg style="display:block" width="8" height="11" viewBox="0 0 8 11"><path d="M2 1.2L6.6 5.5L2 9.8" stroke="#4a4a4a" stroke-width="2.4" fill="none"/></svg></div><div style="position:absolute;left:1361px;top:166px;width:57px;height:24px;background:#e8e5e0;"></div><div style="position:absolute;left:1366px;top:171.5px;text-align:left;white-space:pre;font:12.7px Liberation Sans,sans-serif;color:#3f3f3f;line-height:16px;">Element</div><div style="position:absolute;left:1379px;top:246.5px;width:36.2px;text-align:right;white-space:pre;font:bold 8.5px Liberation Sans,sans-serif;letter-spacing:-0.35px;color:#75716c;line-height:10px;">AUTO</div><div style="position:absolute;left:843px;top:264px;width:161.5px;height:97.5px;background:#cbc6bf;box-shadow:inset 0 0 0 1px #5b5a55;"></div><div style="position:absolute;left:843px;top:264px;width:161.5px;height:25px;background:#5e5d58;"></div><div style="position:absolute;left:843px;top:269.8px;width:161.5px;text-align:center;white-space:pre;font:bold 12.6px Liberation Sans,sans-serif;letter-spacing:-0.224px;color:#f7f7f7;line-height:16px;">List.FilterByBoolMask</div><div style="position:absolute;left:844px;top:289px;width:92px;height:24.5px;background:#e8e5e0;"></div><div style="position:absolute;left:849px;top:294.75px;text-align:left;white-space:pre;font:12.7px Liberation Sans,sans-serif;color:#3f3f3f;line-height:16px;">list</div><div style="position:absolute;left:927px;top:295.75px;width:8px;height:11px"><svg style="display:block" width="8" height="11" viewBox="0 0 8 11"><path d="M2 1.2L6.6 5.5L2 9.8" stroke="#4a4a4a" stroke-width="2.4" fill="none"/></svg></div><div style="position:absolute;left:844px;top:313.5px;width:92px;height:24.5px;background:#e8e5e0;"></div><div style="position:absolute;left:844px;top:312.5px;width:92px;height:1.0px;background:#cfcbc5;"></div><div style="position:absolute;left:849px;top:319.25px;text-align:left;white-space:pre;font:12.7px Liberation Sans,sans-serif;color:#3f3f3f;line-height:16px;">mask</div><div style="position:absolute;left:927px;top:320.25px;width:8px;height:11px"><svg style="display:block" width="8" height="11" viewBox="0 0 8 11"><path d="M2 1.2L6.6 5.5L2 9.8" stroke="#4a4a4a" stroke-width="2.4" fill="none"/></svg></div><div style="position:absolute;left:974px;top:289px;width:29.5px;height:24.5px;background:#e8e5e0;"></div><div style="position:absolute;left:979px;top:294.75px;text-align:left;white-space:pre;font:12.7px Liberation Sans,sans-serif;color:#3f3f3f;line-height:16px;">in</div><div style="position:absolute;left:974px;top:313.5px;width:29.5px;height:24.5px;background:#e8e5e0;"></div><div style="position:absolute;left:974px;top:312.5px;width:29.5px;height:1.0px;background:#cfcbc5;"></div><div style="position:absolute;left:979px;top:319.25px;text-align:left;white-space:pre;font:12.7px Liberation Sans,sans-serif;color:#3f3f3f;line-height:16px;">out</div><div style="position:absolute;left:964.5px;top:344.5px;width:36.2px;text-align:right;white-space:pre;font:bold 8.5px Liberation Sans,sans-serif;letter-spacing:-0.35px;color:#75716c;line-height:10px;">AUTO</div><div style="position:absolute;left:713px;top:370px;width:202.5px;height:123px;background:#cbc6bf;box-shadow:inset 0 0 0 1px #5b5a55;"></div><div style="position:absolute;left:713px;top:370px;width:202.5px;height:25px;background:#5e5d58;"></div><div style="position:absolute;left:713px;top:375.8px;width:202.5px;text-align:center;white-space:pre;font:bold 12.6px Liberation Sans,sans-serif;letter-spacing:-0.212px;color:#f7f7f7;line-height:16px;">String.Contains</div><div style="position:absolute;left:714px;top:395px;width:127px;height:24.5px;background:#e8e5e0;"></div><div style="position:absolute;left:719px;top:400.75px;text-align:left;white-space:pre;font:12.7px Liberation Sans,sans-serif;color:#3f3f3f;line-height:16px;">str</div><div style="position:absolute;left:832px;top:401.75px;width:8px;height:11px"><svg style="display:block" width="8" height="11" viewBox="0 0 8 11"><path d="M2 1.2L6.6 5.5L2 9.8" stroke="#4a4a4a" stroke-width="2.4" fill="none"/></svg></div><div style="position:absolute;left:714px;top:419.5px;width:127px;height:25.0px;background:#e8e5e0;"></div><div style="position:absolute;left:714px;top:418.5px;width:127px;height:1.0px;background:#cfcbc5;"></div><div style="position:absolute;left:719px;top:425.5px;text-align:left;white-space:pre;font:12.7px Liberation Sans,sans-serif;color:#3f3f3f;line-height:16px;">searchFor</div><div style="position:absolute;left:832px;top:426.5px;width:8px;height:11px"><svg style="display:block" width="8" height="11" viewBox="0 0 8 11"><path d="M2 1.2L6.6 5.5L2 9.8" stroke="#4a4a4a" stroke-width="2.4" fill="none"/></svg></div><div style="position:absolute;left:714px;top:444.5px;width:127px;height:23.5px;background:#e8e5e0;"></div><div style="position:absolute;left:714px;top:443.5px;width:127px;height:1.0px;background:#cfcbc5;"></div><div style="position:absolute;left:719px;top:449.75px;text-align:left;white-space:pre;font:12.7px Liberation Sans,sans-serif;color:#3f3f3f;line-height:16px;">ignoreCase</div><div style="position:absolute;left:832px;top:450.75px;width:8px;height:11px"><svg style="display:block" width="8" height="11" viewBox="0 0 8 11"><path d="M2 1.2L6.6 5.5L2 9.8" stroke="#4a4a4a" stroke-width="2.4" fill="none"/></svg></div><div style="position:absolute;left:879px;top:395px;width:35.5px;height:24.5px;background:#e8e5e0;"></div><div style="position:absolute;left:884px;top:400.75px;text-align:left;white-space:pre;font:12.7px Liberation Sans,sans-serif;color:#3f3f3f;line-height:16px;">bool</div><div style="position:absolute;left:875.5px;top:476px;width:36.2px;text-align:right;white-space:pre;font:bold 8.5px Liberation Sans,sans-serif;letter-spacing:-0.35px;color:#75716c;line-height:10px;">AUTO</div><div style="position:absolute;left:982px;top:368px;width:82.5px;height:72.5px;background:#cbc6bf;box-shadow:inset 0 0 0 1px #5b5a55;"></div><div style="position:absolute;left:982px;top:368px;width:82.5px;height:25.5px;background:#5e5d58;"></div><div style="position:absolute;left:982px;top:374.05px;width:82.5px;text-align:center;white-space:pre;font:bold 12.6px Liberation Sans,sans-serif;letter-spacing:-0.391px;color:#f7f7f7;line-height:16px;">Code Block</div><div style="position:absolute;left:983px;top:393.5px;width:64px;height:18.0px;background:#e8e5e0;"></div><div style="position:absolute;left:986px;top:396.3px;text-align:left;white-space:pre;font:13px Liberation Mono,monospace;color:#8a5a2e;line-height:16px;">"Type"<span style="color:#222">;</span></div><div style="position:absolute;left:1047px;top:393.5px;width:1px;height:18.0px;background:#b8b4ae;"></div><div style="position:absolute;left:1048px;top:393.5px;width:15.5px;height:18.0px;background:#e8e5e0;"></div><div style="position:absolute;left:1048px;top:396.7px;width:15.5px;text-align:center;white-space:pre;font:12px Liberation Mono,monospace;color:#444;line-height:16px;">&gt;</div><div style="position:absolute;left:547px;top:412px;width:90.5px;height:73.5px;background:#cbc6bf;box-shadow:inset 0 0 0 1px #5b5a55;"></div><div style="position:absolute;left:547px;top:412px;width:90.5px;height:25.5px;background:#5e5d58;"></div><div style="position:absolute;left:547px;top:418.05px;width:90.5px;text-align:center;white-space:pre;font:bold 12.6px Liberation Sans,sans-serif;letter-spacing:-0.391px;color:#f7f7f7;line-height:16px;">Code Block</div><div style="position:absolute;left:548px;top:437.5px;width:71.5px;height:17.0px;background:#e8e5e0;"></div><div style="position:absolute;left:551px;top:439.8px;text-align:left;white-space:pre;font:13px Liberation Mono,monospace;color:#8a5a2e;line-height:16px;">"Arial"<span style="color:#222">;</span></div><div style="position:absolute;left:619.5px;top:437.5px;width:1.0px;height:17.0px;background:#b8b4ae;"></div><div style="position:absolute;left:620.5px;top:437.5px;width:16.0px;height:17.0px;background:#e8e5e0;"></div><div style="position:absolute;left:620.5px;top:440.2px;width:16.0px;text-align:center;white-space:pre;font:12px Liberation Mono,monospace;color:#444;line-height:16px;">&gt;</div><div style="position:absolute;left:537px;top:502px;width:128px;height:49.5px;background:#cbc6bf;box-shadow:inset 0 0 0 1px #5b5a55;"></div><div style="position:absolute;left:537px;top:502px;width:128px;height:25px;background:#5e5d58;"></div><div style="position:absolute;left:537px;top:507.8px;width:127.5px;text-align:center;white-space:pre;font:bold 12.6px Liberation Sans,sans-serif;letter-spacing:-0.257px;color:#f7f7f7;line-height:16px;">Boolean</div><div style="position:absolute;left:647px;top:527px;width:17px;height:23.5px;background:#e8e5e0;"></div><div style="position:absolute;left:647px;top:532.5px;width:17px;text-align:center;white-space:pre;font:12px Liberation Mono,monospace;color:#444;line-height:16px;">&gt;</div><div style="position:absolute;left:547.5px;top:533.5px;width:9px;height:9px;border:1px solid #333;border-radius:50%;background:#fff"></div><div style="position:absolute;left:550.5px;top:536.5px;width:5px;height:5px;border-radius:50%;background:#222"></div><div style="position:absolute;left:561px;top:532px;text-align:left;white-space:pre;font:12.2px Liberation Sans,sans-serif;color:#333;line-height:16px;">True</div><div style="position:absolute;left:597.5px;top:533.5px;width:9px;height:9px;border:1px solid #555;border-radius:50%;background:#fff"></div><div style="position:absolute;left:611px;top:532px;text-align:left;white-space:pre;font:12.2px Liberation Sans,sans-serif;color:#333;line-height:16px;">False</div><div style="position:absolute;left:10px;top:349px;width:222px;height:273px;background:#fff;box-sizing:border-box;border:1px solid #ababab;"></div><div style="position:absolute;left:10px;top:596px;width:222px;height:1px;background:#c8c8c8;"></div><div style="position:absolute;left:19px;top:604px;text-align:left;white-space:pre;font:bold 8px Liberation Sans,sans-serif;letter-spacing:-0.4px;color:#555;line-height:10px;">@L2 @L1</div><div style="position:absolute;left:172px;top:602px;width:51px;text-align:right;white-space:pre;font:italic 12px Liberation Sans,sans-serif;color:#7a1818;line-height:14px;">{735}</div><div style="position:absolute;left:220.5px;top:350.5px;width:5.5px;height:8px;border-radius:3px;background:#c4c4c4"></div><div style="position:absolute;left:242px;top:403px;width:284.5px;height:272.5px;background:#fff;box-sizing:border-box;border:1px solid #ababab;"></div><div style="position:absolute;left:242px;top:650px;width:284.5px;height:1px;background:#c8c8c8;"></div><div style="position:absolute;left:251px;top:658px;text-align:left;white-space:pre;font:bold 8px Liberation Sans,sans-serif;letter-spacing:-0.4px;color:#555;line-height:10px;">@L2 @L1</div><div style="position:absolute;left:466.5px;top:656px;width:51px;text-align:right;white-space:pre;font:italic 12px Liberation Sans,sans-serif;color:#7a1818;line-height:14px;">{735}</div><div style="position:absolute;left:515.0px;top:404.5px;width:5.5px;height:8px;border-radius:3px;background:#c4c4c4"></div><div style="position:absolute;left:1154px;top:267px;width:286px;height:273.5px;background:#fff;box-sizing:border-box;border:1px solid #ababab;"></div><div style="position:absolute;left:1154px;top:513px;width:286px;height:1px;background:#c8c8c8;"></div><div style="position:absolute;left:1163px;top:521px;text-align:left;white-space:pre;font:bold 8px Liberation Sans,sans-serif;letter-spacing:-0.4px;color:#555;line-height:10px;">@L2 @L1</div><div style="position:absolute;left:1360px;top:519px;width:61px;text-align:right;white-space:pre;font:italic 12px Liberation Sans,sans-serif;color:#7a1818;line-height:14px;">{599}</div><div style="position:absolute;left:1417px;top:268px;width:5.5px;height:8px;border-radius:3px;background:#c4c4c4"></div><div style="position:absolute;left:27px;top:357.5px;text-align:left;white-space:pre;font:10.1px Liberation Mono,monospace;color:#707070;line-height:12px;">List</div><div style="position:absolute;left:0;top:0;width:1428px;height:594px;overflow:hidden"><div style="position:absolute;left:43px;top:373.0px;width:19px;height:10px;background:#d6d6d6"></div><div style="position:absolute;left:43px;top:372.0px;width:19px;text-align:center;font:italic 10.5px Liberation Mono,monospace;color:#7a7a7a;line-height:12px">0</div><div style="position:absolute;left:66px;top:372.5px;white-space:pre;font:10.4px Liberation Mono,monospace;color:#727272;line-height:12px">TextNote</div><div style="position:absolute;left:129px;top:370.5px;width:46.22px;height:15px;background:#c9f6c9"></div><div style="position:absolute;left:133px;top:371.5px;white-space:pre;font:11px Liberation Sans,sans-serif;color:#5a5a5a;line-height:14px">725284</div><div style="position:absolute;left:43px;top:392.9px;width:19px;height:10px;background:#d6d6d6"></div><div style="position:absolute;left:43px;top:391.9px;width:19px;text-align:center;font:italic 10.5px Liberation Mono,monospace;color:#7a7a7a;line-height:12px">1</div><div style="position:absolute;left:66px;top:392.4px;white-space:pre;font:10.4px Liberation Mono,monospace;color:#727272;line-height:12px">TextNote</div><div style="position:absolute;left:129px;top:390.4px;width:52.34px;height:15px;background:#c9f6c9"></div><div style="position:absolute;left:133px;top:391.4px;white-space:pre;font:11px Liberation Sans,sans-serif;color:#5a5a5a;line-height:14px">1227975</div><div style="position:absolute;left:43px;top:412.8px;width:19px;height:10px;background:#d6d6d6"></div><div style="position:absolute;left:43px;top:411.8px;width:19px;text-align:center;font:italic 10.5px Liberation Mono,monospace;color:#7a7a7a;line-height:12px">2</div><div style="position:absolute;left:66px;top:412.3px;white-space:pre;font:10.4px Liberation Mono,monospace;color:#727272;line-height:12px">TextNote</div><div style="position:absolute;left:129px;top:410.3px;width:52.34px;height:15px;background:#c9f6c9"></div><div style="position:absolute;left:133px;top:411.3px;white-space:pre;font:11px Liberation Sans,sans-serif;color:#5a5a5a;line-height:14px">1284594</div><div style="position:absolute;left:43px;top:432.7px;width:19px;height:10px;background:#d6d6d6"></div><div style="position:absolute;left:43px;top:431.7px;width:19px;text-align:center;font:italic 10.5px Liberation Mono,monospace;color:#7a7a7a;line-height:12px">3</div><div style="position:absolute;left:66px;top:432.2px;white-space:pre;font:10.4px Liberation Mono,monospace;color:#727272;line-height:12px">TextNote</div><div style="position:absolute;left:129px;top:430.2px;width:52.34px;height:15px;background:#c9f6c9"></div><div style="position:absolute;left:133px;top:431.2px;white-space:pre;font:11px Liberation Sans,sans-serif;color:#5a5a5a;line-height:14px">2134221</div><div style="position:absolute;left:43px;top:452.6px;width:19px;height:10px;background:#d6d6d6"></div><div style="position:absolute;left:43px;top:451.6px;width:19px;text-align:center;font:italic 10.5px Liberation Mono,monospace;color:#7a7a7a;line-height:12px">4</div><div style="position:absolute;left:66px;top:452.1px;white-space:pre;font:10.4px Liberation Mono,monospace;color:#727272;line-height:12px">TextNote</div><div style="position:absolute;left:129px;top:450.1px;width:52.34px;height:15px;background:#c9f6c9"></div><div style="position:absolute;left:133px;top:451.1px;white-space:pre;font:11px Liberation Sans,sans-serif;color:#5a5a5a;line-height:14px">2134222</div><div style="position:absolute;left:43px;top:472.5px;width:19px;height:10px;background:#d6d6d6"></div><div style="position:absolute;left:43px;top:471.5px;width:19px;text-align:center;font:italic 10.5px Liberation Mono,monospace;color:#7a7a7a;line-height:12px">5</div><div style="position:absolute;left:66px;top:472.0px;white-space:pre;font:10.4px Liberation Mono,monospace;color:#727272;line-height:12px">TextNote</div><div style="position:absolute;left:129px;top:470.0px;width:52.34px;height:15px;background:#c9f6c9"></div><div style="position:absolute;left:133px;top:471.0px;white-space:pre;font:11px Liberation Sans,sans-serif;color:#5a5a5a;line-height:14px">2134223</div><div style="position:absolute;left:43px;top:492.4px;width:19px;height:10px;background:#d6d6d6"></div><div style="position:absolute;left:43px;top:491.4px;width:19px;text-align:center;font:italic 10.5px Liberation Mono,monospace;color:#7a7a7a;line-height:12px">6</div><div style="position:absolute;left:66px;top:491.9px;white-space:pre;font:10.4px Liberation Mono,monospace;color:#727272;line-height:12px">TextNote</div><div style="position:absolute;left:129px;top:489.9px;width:52.34px;height:15px;background:#c9f6c9"></div><div style="position:absolute;left:133px;top:490.9px;white-space:pre;font:11px Liberation Sans,sans-serif;color:#5a5a5a;line-height:14px">2134224</div><div style="position:absolute;left:43px;top:512.3px;width:19px;height:10px;background:#d6d6d6"></div><div style="position:absolute;left:43px;top:511.29999999999995px;width:19px;text-align:center;font:italic 10.5px Liberation Mono,monospace;color:#7a7a7a;line-height:12px">7</div><div style="position:absolute;left:66px;top:511.79999999999995px;white-space:pre;font:10.4px Liberation Mono,monospace;color:#727272;line-height:12px">TextNote</div><div style="position:absolute;left:129px;top:509.79999999999995px;width:52.34px;height:15px;background:#c9f6c9"></div><div style="position:absolute;left:133px;top:510.79999999999995px;white-space:pre;font:11px Liberation Sans,sans-serif;color:#5a5a5a;line-height:14px">2134225</div><div style="position:absolute;left:43px;top:532.2px;width:19px;height:10px;background:#d6d6d6"></div><div style="position:absolute;left:43px;top:531.2px;width:19px;text-align:center;font:italic 10.5px Liberation Mono,monospace;color:#7a7a7a;line-height:12px">8</div><div style="position:absolute;left:66px;top:531.7px;white-space:pre;font:10.4px Liberation Mono,monospace;color:#727272;line-height:12px">TextNote</div><div style="position:absolute;left:129px;top:529.7px;width:52.34px;height:15px;background:#c9f6c9"></div><div style="position:absolute;left:133px;top:530.7px;white-space:pre;font:11px Liberation Sans,sans-serif;color:#5a5a5a;line-height:14px">2134226</div><div style="position:absolute;left:43px;top:552.1px;width:19px;height:10px;background:#d6d6d6"></div><div style="position:absolute;left:43px;top:551.1px;width:19px;text-align:center;font:italic 10.5px Liberation Mono,monospace;color:#7a7a7a;line-height:12px">9</div><div style="position:absolute;left:66px;top:551.6px;white-space:pre;font:10.4px Liberation Mono,monospace;color:#727272;line-height:12px">TextNote</div><div style="position:absolute;left:129px;top:549.6px;width:52.34px;height:15px;background:#c9f6c9"></div><div style="position:absolute;left:133px;top:550.6px;white-space:pre;font:11px Liberation Sans,sans-serif;color:#5a5a5a;line-height:14px">2134227</div><div style="position:absolute;left:43px;top:572.0px;width:25px;height:10px;background:#d6d6d6"></div><div style="position:absolute;left:43px;top:571.0px;width:25px;text-align:center;font:italic 10.5px Liberation Mono,monospace;color:#7a7a7a;line-height:12px">10</div><div style="position:absolute;left:72px;top:571.5px;white-space:pre;font:10.4px Liberation Mono,monospace;color:#727272;line-height:12px">TextNote</div><div style="position:absolute;left:135px;top:569.5px;width:52.34px;height:15px;background:#c9f6c9"></div><div style="position:absolute;left:139px;top:570.5px;white-space:pre;font:11px Liberation Sans,sans-serif;color:#5a5a5a;line-height:14px">2134228</div><div style="position:absolute;left:43px;top:591.9px;width:25px;height:10px;background:#d6d6d6"></div><div style="position:absolute;left:43px;top:590.9px;width:25px;text-align:center;font:italic 10.5px Liberation Mono,monospace;color:#7a7a7a;line-height:12px">11</div><div style="position:absolute;left:72px;top:591.4px;white-space:pre;font:10.4px Liberation Mono,monospace;color:#727272;line-height:12px">TextNote</div><div style="position:absolute;left:135px;top:589.4px;width:52.34px;height:15px;background:#c9f6c9"></div><div style="position:absolute;left:139px;top:590.4px;white-space:pre;font:11px Liberation Sans,sans-serif;color:#5a5a5a;line-height:14px">2134229</div><div style="position:absolute;left:26.5px;top:368.5px;width:1px;height:225.5px;background:#aaa"></div></div><div style="position:absolute;left:258px;top:411.5px;text-align:left;white-space:pre;font:10.1px Liberation Mono,monospace;color:#707070;line-height:12px;">List</div><div style="position:absolute;left:0;top:0;width:1428px;height:647px;overflow:hidden"><div style="position:absolute;left:274px;top:425.0px;width:19px;height:10px;background:#d6d6d6"></div><div style="position:absolute;left:274px;top:424.0px;width:19px;text-align:center;font:italic 10.5px Liberation Mono,monospace;color:#7a7a7a;line-height:12px">0</div><div style="position:absolute;left:297px;top:424.5px;white-space:pre;font:10.4px Liberation Mono,monospace;color:#727272;line-height:12px">5mm</div><div style="position:absolute;left:274px;top:439.2px;width:19px;height:10px;background:#d6d6d6"></div><div style="position:absolute;left:274px;top:438.2px;width:19px;text-align:center;font:italic 10.5px Liberation Mono,monospace;color:#7a7a7a;line-height:12px">1</div><div style="position:absolute;left:297px;top:438.7px;white-space:pre;font:10.4px Liberation Mono,monospace;color:#727272;line-height:12px">2.5mm</div><div style="position:absolute;left:274px;top:453.4px;width:19px;height:10px;background:#d6d6d6"></div><div style="position:absolute;left:274px;top:452.4px;width:19px;text-align:center;font:italic 10.5px Liberation Mono,monospace;color:#7a7a7a;line-height:12px">2</div><div style="position:absolute;left:297px;top:452.9px;white-space:pre;font:10.4px Liberation Mono,monospace;color:#727272;line-height:12px">1.8mm</div><div style="position:absolute;left:274px;top:467.6px;width:19px;height:10px;background:#d6d6d6"></div><div style="position:absolute;left:274px;top:466.6px;width:19px;text-align:center;font:italic 10.5px Liberation Mono,monospace;color:#7a7a7a;line-height:12px">3</div><div style="position:absolute;left:297px;top:467.1px;white-space:pre;font:10.4px Liberation Mono,monospace;color:#727272;line-height:12px">002_SH_EL_-1.14_LIVING ROOM-Arial-</div><div style="position:absolute;left:274px;top:481.8px;width:19px;height:10px;background:#d6d6d6"></div><div style="position:absolute;left:274px;top:480.8px;width:19px;text-align:center;font:italic 10.5px Liberation Mono,monospace;color:#7a7a7a;line-height:12px">4</div><div style="position:absolute;left:297px;top:481.3px;white-space:pre;font:10.4px Liberation Mono,monospace;color:#727272;line-height:12px">002_SH_EL_-1.14_LIVING ROOM-Arial-</div><div style="position:absolute;left:274px;top:496.0px;width:19px;height:10px;background:#d6d6d6"></div><div style="position:absolute;left:274px;top:495.0px;width:19px;text-align:center;font:italic 10.5px Liberation Mono,monospace;color:#7a7a7a;line-height:12px">5</div><div style="position:absolute;left:297px;top:495.5px;white-space:pre;font:10.4px Liberation Mono,monospace;color:#727272;line-height:12px">002_SH_EL_-1.14_LIVING ROOM-Arial-</div><div style="position:absolute;left:274px;top:510.20000000000005px;width:19px;height:10px;background:#d6d6d6"></div><div style="position:absolute;left:274px;top:509.20000000000005px;width:19px;text-align:center;font:italic 10.5px Liberation Mono,monospace;color:#7a7a7a;line-height:12px">6</div><div style="position:absolute;left:297px;top:509.70000000000005px;white-space:pre;font:10.4px Liberation Mono,monospace;color:#727272;line-height:12px">002_SH_EL_-1.14_LIVING ROOM-Arial-</div><div style="position:absolute;left:274px;top:524.4px;width:19px;height:10px;background:#d6d6d6"></div><div style="position:absolute;left:274px;top:523.4px;width:19px;text-align:center;font:italic 10.5px Liberation Mono,monospace;color:#7a7a7a;line-height:12px">7</div><div style="position:absolute;left:297px;top:523.9px;white-space:pre;font:10.4px Liberation Mono,monospace;color:#727272;line-height:12px">002_SH_EL_-1.14_LIVING ROOM-Arial-</div><div style="position:absolute;left:274px;top:538.6px;width:19px;height:10px;background:#d6d6d6"></div><div style="position:absolute;left:274px;top:537.6px;width:19px;text-align:center;font:italic 10.5px Liberation Mono,monospace;color:#7a7a7a;line-height:12px">8</div><div style="position:absolute;left:297px;top:538.1px;white-space:pre;font:10.4px Liberation Mono,monospace;color:#727272;line-height:12px">002_SH_EL_-1.14_LIVING ROOM-Arial-</div><div style="position:absolute;left:274px;top:552.8px;width:19px;height:10px;background:#d6d6d6"></div><div style="position:absolute;left:274px;top:551.8px;width:19px;text-align:center;font:italic 10.5px Liberation Mono,monospace;color:#7a7a7a;line-height:12px">9</div><div style="position:absolute;left:297px;top:552.3px;white-space:pre;font:10.4px Liberation Mono,monospace;color:#727272;line-height:12px">002_SH_EL_-1.14_LIVING ROOM-Arial-</div><div style="position:absolute;left:274px;top:567.0px;width:25px;height:10px;background:#d6d6d6"></div><div style="position:absolute;left:274px;top:566.0px;width:25px;text-align:center;font:italic 10.5px Liberation Mono,monospace;color:#7a7a7a;line-height:12px">10</div><div style="position:absolute;left:303px;top:566.5px;white-space:pre;font:10.4px Liberation Mono,monospace;color:#727272;line-height:12px">002_SH_EL_-1.14_LIVING ROOM-Arial</div><div style="position:absolute;left:274px;top:581.2px;width:25px;height:10px;background:#d6d6d6"></div><div style="position:absolute;left:274px;top:580.2px;width:25px;text-align:center;font:italic 10.5px Liberation Mono,monospace;color:#7a7a7a;line-height:12px">11</div><div style="position:absolute;left:303px;top:580.7px;white-space:pre;font:10.4px Liberation Mono,monospace;color:#727272;line-height:12px">002_SH_EL_-1.14_LIVING ROOM-Arial</div><div style="position:absolute;left:274px;top:595.4px;width:25px;height:10px;background:#d6d6d6"></div><div style="position:absolute;left:274px;top:594.4px;width:25px;text-align:center;font:italic 10.5px Liberation Mono,monospace;color:#7a7a7a;line-height:12px">12</div><div style="position:absolute;left:303px;top:594.9px;white-space:pre;font:10.4px Liberation Mono,monospace;color:#727272;line-height:12px">002_SH_EL_-1.14_LIVING ROOM-Arial</div><div style="position:absolute;left:274px;top:609.6px;width:25px;height:10px;background:#d6d6d6"></div><div style="position:absolute;left:274px;top:608.6px;width:25px;text-align:center;font:italic 10.5px Liberation Mono,monospace;color:#7a7a7a;line-height:12px">13</div><div style="position:absolute;left:303px;top:609.1px;white-space:pre;font:10.4px Liberation Mono,monospace;color:#727272;line-height:12px">002_SH_EL_-1.14_LIVING ROOM-Arial</div><div style="position:absolute;left:274px;top:623.8px;width:25px;height:10px;background:#d6d6d6"></div><div style="position:absolute;left:274px;top:622.8px;width:25px;text-align:center;font:italic 10.5px Liberation Mono,monospace;color:#7a7a7a;line-height:12px">14</div><div style="position:absolute;left:303px;top:623.3px;white-space:pre;font:10.4px Liberation Mono,monospace;color:#727272;line-height:12px">002_SH_EL_-1.14_LIVING ROOM-Arial</div><div style="position:absolute;left:274px;top:638.0px;width:25px;height:10px;background:#d6d6d6"></div><div style="position:absolute;left:274px;top:637.0px;width:25px;text-align:center;font:italic 10.5px Liberation Mono,monospace;color:#7a7a7a;line-height:12px">15</div><div style="position:absolute;left:303px;top:637.5px;white-space:pre;font:10.4px Liberation Mono,monospace;color:#727272;line-height:12px">002_SH_EL_-1.14_LIVING ROOM-Arial</div><div style="position:absolute;left:274px;top:652.2px;width:25px;height:10px;background:#d6d6d6"></div><div style="position:absolute;left:274px;top:651.2px;width:25px;text-align:center;font:italic 10.5px Liberation Mono,monospace;color:#7a7a7a;line-height:12px">16</div><div style="position:absolute;left:303px;top:651.7px;white-space:pre;font:10.4px Liberation Mono,monospace;color:#727272;line-height:12px">002_SH_EL_-1.14_LIVING ROOM-Arial</div><div style="position:absolute;left:257.5px;top:422.5px;width:1px;height:224.5px;background:#aaa"></div></div><div style="position:absolute;left:1170px;top:276px;text-align:left;white-space:pre;font:10.1px Liberation Mono,monospace;color:#707070;line-height:12px;">List</div><div style="position:absolute;left:0;top:0;width:1428px;height:511px;overflow:hidden"><div style="position:absolute;left:1186px;top:292.0px;width:19px;height:10px;background:#d6d6d6"></div><div style="position:absolute;left:1186px;top:291.0px;width:19px;text-align:center;font:italic 10.5px Liberation Mono,monospace;color:#7a7a7a;line-height:12px">0</div><div style="position:absolute;left:1209px;top:291.5px;white-space:pre;font:10.4px Liberation Mono,monospace;color:#727272;line-height:12px">TextNote</div><div style="position:absolute;left:1272px;top:289.5px;width:52.34px;height:15px;background:#c9f6c9"></div><div style="position:absolute;left:1276px;top:290.5px;white-space:pre;font:11px Liberation Sans,sans-serif;color:#5a5a5a;line-height:14px">2134221</div><div style="position:absolute;left:1186px;top:311.94px;width:19px;height:10px;background:#d6d6d6"></div><div style="position:absolute;left:1186px;top:310.94px;width:19px;text-align:center;font:italic 10.5px Liberation Mono,monospace;color:#7a7a7a;line-height:12px">1</div><div style="position:absolute;left:1209px;top:311.44px;white-space:pre;font:10.4px Liberation Mono,monospace;color:#727272;line-height:12px">TextNote</div><div style="position:absolute;left:1272px;top:309.44px;width:52.34px;height:15px;background:#c9f6c9"></div><div style="position:absolute;left:1276px;top:310.44px;white-space:pre;font:11px Liberation Sans,sans-serif;color:#5a5a5a;line-height:14px">2134222</div><div style="position:absolute;left:1186px;top:331.88px;width:19px;height:10px;background:#d6d6d6"></div><div style="position:absolute;left:1186px;top:330.88px;width:19px;text-align:center;font:italic 10.5px Liberation Mono,monospace;color:#7a7a7a;line-height:12px">2</div><div style="position:absolute;left:1209px;top:331.38px;white-space:pre;font:10.4px Liberation Mono,monospace;color:#727272;line-height:12px">TextNote</div><div style="position:absolute;left:1272px;top:329.38px;width:52.34px;height:15px;background:#c9f6c9"></div><div style="position:absolute;left:1276px;top:330.38px;white-space:pre;font:11px Liberation Sans,sans-serif;color:#5a5a5a;line-height:14px">2134223</div><div style="position:absolute;left:1186px;top:351.82px;width:19px;height:10px;background:#d6d6d6"></div><div style="position:absolute;left:1186px;top:350.82px;width:19px;text-align:center;font:italic 10.5px Liberation Mono,monospace;color:#7a7a7a;line-height:12px">3</div><div style="position:absolute;left:1209px;top:351.32px;white-space:pre;font:10.4px Liberation Mono,monospace;color:#727272;line-height:12px">TextNote</div><div style="position:absolute;left:1272px;top:349.32px;width:52.34px;height:15px;background:#c9f6c9"></div><div style="position:absolute;left:1276px;top:350.32px;white-space:pre;font:11px Liberation Sans,sans-serif;color:#5a5a5a;line-height:14px">2134224</div><div style="position:absolute;left:1186px;top:371.76px;width:19px;height:10px;background:#d6d6d6"></div><div style="position:absolute;left:1186px;top:370.76px;width:19px;text-align:center;font:italic 10.5px Liberation Mono,monospace;color:#7a7a7a;line-height:12px">4</div><div style="position:absolute;left:1209px;top:371.26px;white-space:pre;font:10.4px Liberation Mono,monospace;color:#727272;line-height:12px">TextNote</div><div style="position:absolute;left:1272px;top:369.26px;width:52.34px;height:15px;background:#c9f6c9"></div><div style="position:absolute;left:1276px;top:370.26px;white-space:pre;font:11px Liberation Sans,sans-serif;color:#5a5a5a;line-height:14px">2134225</div><div style="position:absolute;left:1186px;top:391.7px;width:19px;height:10px;background:#d6d6d6"></div><div style="position:absolute;left:1186px;top:390.7px;width:19px;text-align:center;font:italic 10.5px Liberation Mono,monospace;color:#7a7a7a;line-height:12px">5</div><div style="position:absolute;left:1209px;top:391.2px;white-space:pre;font:10.4px Liberation Mono,monospace;color:#727272;line-height:12px">TextNote</div><div style="position:absolute;left:1272px;top:389.2px;width:52.34px;height:15px;background:#c9f6c9"></div><div style="position:absolute;left:1276px;top:390.2px;white-space:pre;font:11px Liberation Sans,sans-serif;color:#5a5a5a;line-height:14px">2134226</div><div style="position:absolute;left:1186px;top:411.64px;width:19px;height:10px;background:#d6d6d6"></div><div style="position:absolute;left:1186px;top:410.64px;width:19px;text-align:center;font:italic 10.5px Liberation Mono,monospace;color:#7a7a7a;line-height:12px">6</div><div style="position:absolute;left:1209px;top:411.14px;white-space:pre;font:10.4px Liberation Mono,monospace;color:#727272;line-height:12px">TextNote</div><div style="position:absolute;left:1272px;top:409.14px;width:52.34px;height:15px;background:#c9f6c9"></div><div style="position:absolute;left:1276px;top:410.14px;white-space:pre;font:11px Liberation Sans,sans-serif;color:#5a5a5a;line-height:14px">2134227</div><div style="position:absolute;left:1186px;top:431.58000000000004px;width:19px;height:10px;background:#d6d6d6"></div><div style="position:absolute;left:1186px;top:430.58000000000004px;width:19px;text-align:center;font:italic 10.5px Liberation Mono,monospace;color:#7a7a7a;line-height:12px">7</div><div style="position:absolute;left:1209px;top:431.08000000000004px;white-space:pre;font:10.4px Liberation Mono,monospace;color:#727272;line-height:12px">TextNote</div><div style="position:absolute;left:1272px;top:429.08000000000004px;width:52.34px;height:15px;background:#c9f6c9"></div><div style="position:absolute;left:1276px;top:430.08000000000004px;white-space:pre;font:11px Liberation Sans,sans-serif;color:#5a5a5a;line-height:14px">2134228</div><div style="position:absolute;left:1186px;top:451.52px;width:19px;height:10px;background:#d6d6d6"></div><div style="position:absolute;left:1186px;top:450.52px;width:19px;text-align:center;font:italic 10.5px Liberation Mono,monospace;color:#7a7a7a;line-height:12px">8</div><div style="position:absolute;left:1209px;top:451.02px;white-space:pre;font:10.4px Liberation Mono,monospace;color:#727272;line-height:12px">TextNote</div><div style="position:absolute;left:1272px;top:449.02px;width:52.34px;height:15px;background:#c9f6c9"></div><div style="position:absolute;left:1276px;top:450.02px;white-space:pre;font:11px Liberation Sans,sans-serif;color:#5a5a5a;line-height:14px">2134229</div><div style="position:absolute;left:1186px;top:471.46000000000004px;width:19px;height:10px;background:#d6d6d6"></div><div style="position:absolute;left:1186px;top:470.46000000000004px;width:19px;text-align:center;font:italic 10.5px Liberation Mono,monospace;color:#7a7a7a;line-height:12px">9</div><div style="position:absolute;left:1209px;top:470.96000000000004px;white-space:pre;font:10.4px Liberation Mono,monospace;color:#727272;line-height:12px">TextNote</div><div style="position:absolute;left:1272px;top:468.96000000000004px;width:52.34px;height:15px;background:#c9f6c9"></div><div style="position:absolute;left:1276px;top:469.96000000000004px;white-space:pre;font:11px Liberation Sans,sans-serif;color:#5a5a5a;line-height:14px">2134230</div><div style="position:absolute;left:1186px;top:491.4px;width:25px;height:10px;background:#d6d6d6"></div><div style="position:absolute;left:1186px;top:490.4px;width:25px;text-align:center;font:italic 10.5px Liberation Mono,monospace;color:#7a7a7a;line-height:12px">10</div><div style="position:absolute;left:1215px;top:490.9px;white-space:pre;font:10.4px Liberation Mono,monospace;color:#727272;line-height:12px">TextNote</div><div style="position:absolute;left:1278px;top:488.9px;width:52.34px;height:15px;background:#c9f6c9"></div><div style="position:absolute;left:1282px;top:489.9px;white-space:pre;font:11px Liberation Sans,sans-serif;color:#5a5a5a;line-height:14px">2134231</div><div style="position:absolute;left:1186px;top:511.34000000000003px;width:25px;height:10px;background:#d6d6d6"></div><div style="position:absolute;left:1186px;top:510.34000000000003px;width:25px;text-align:center;font:italic 10.5px Liberation Mono,monospace;color:#7a7a7a;line-height:12px">11</div><div style="position:absolute;left:1215px;top:510.84000000000003px;white-space:pre;font:10.4px Liberation Mono,monospace;color:#727272;line-height:12px">TextNote</div><div style="position:absolute;left:1278px;top:508.84000000000003px;width:52.34px;height:15px;background:#c9f6c9"></div><div style="position:absolute;left:1282px;top:509.84000000000003px;white-space:pre;font:11px Liberation Sans,sans-serif;color:#5a5a5a;line-height:14px">2134232</div><div style="position:absolute;left:1169.5px;top:287px;width:1px;height:224px;background:#aaa"></div></div><div style="position:absolute;left:652px;top:190px;width:153.5px;height:33.5px;background:#fff;box-sizing:border-box;border:1px solid #b5b5b5;"></div><div style="position:absolute;left:661.5px;top:199.8px;text-align:left;white-space:pre;font:10.4px Liberation Mono,monospace;color:#727272;line-height:12px;">TextNote</div><div style="position:absolute;left:725px;top:198px;width:53px;height:14.5px;background:#c9f6c9;"></div><div style="position:absolute;left:729px;top:198.5px;text-align:left;white-space:pre;font:11.6px Liberation Sans,sans-serif;color:#5a5a5a;line-height:14px;">1227975</div><div style="position:absolute;left:824px;top:88px;width:211px;height:28.5px;background:#fff;box-sizing:border-box;border:1px solid #b5b5b5;"></div><div style="position:absolute;left:833px;top:97px;text-align:left;white-space:pre;font:10.4px Liberation Mono,monospace;color:#727272;line-height:12px;">2.5mm</div>
</body></html>
